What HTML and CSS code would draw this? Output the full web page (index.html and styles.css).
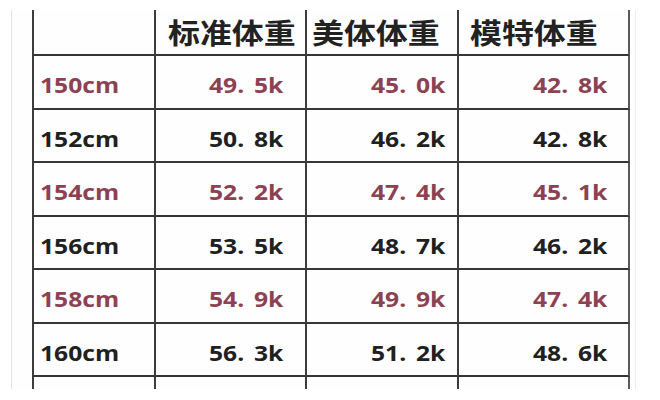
FILE: index.html
```html
<!DOCTYPE html>
<html lang="zh-CN">
<head>
<meta charset="utf-8">
<title>身高体重对照表</title>
<link rel="stylesheet" href="styles.css">
</head>
<body>
<div class="sheet">
  <div class="table">
    <div class="cell head c1"></div>
    <div class="cell head c2"><span class="zh">标准体重</span></div>
    <div class="cell head c3"><span class="zh">美体体重</span></div>
    <div class="cell head c4"><span class="zh">模特体重</span></div>

    <div class="cell c1 red"><span class="num">150cm</span></div>
    <div class="cell c2 red"><span class="num">49. 5k</span></div>
    <div class="cell c3 red"><span class="num">45. 0k</span></div>
    <div class="cell c4 red"><span class="num">42. 8k</span></div>

    <div class="cell c1"><span class="num">152cm</span></div>
    <div class="cell c2"><span class="num">50. 8k</span></div>
    <div class="cell c3"><span class="num">46. 2k</span></div>
    <div class="cell c4"><span class="num">42. 8k</span></div>

    <div class="cell c1 red"><span class="num">154cm</span></div>
    <div class="cell c2 red"><span class="num">52. 2k</span></div>
    <div class="cell c3 red"><span class="num">47. 4k</span></div>
    <div class="cell c4 red"><span class="num">45. 1k</span></div>

    <div class="cell c1"><span class="num">156cm</span></div>
    <div class="cell c2"><span class="num">53. 5k</span></div>
    <div class="cell c3"><span class="num">48. 7k</span></div>
    <div class="cell c4"><span class="num">46. 2k</span></div>

    <div class="cell c1 red"><span class="num">158cm</span></div>
    <div class="cell c2 red"><span class="num">54. 9k</span></div>
    <div class="cell c3 red"><span class="num">49. 9k</span></div>
    <div class="cell c4 red"><span class="num">47. 4k</span></div>

    <div class="cell c1"><span class="num">160cm</span></div>
    <div class="cell c2"><span class="num">56. 3k</span></div>
    <div class="cell c3"><span class="num">51. 2k</span></div>
    <div class="cell c4"><span class="num">48. 6k</span></div>

    <div class="cell c1"></div>
    <div class="cell c2"></div>
    <div class="cell c3"></div>
    <div class="cell c4"></div>
  </div>
</div>
</body>
</html>
```

FILE: styles.css
```css
html, body {
  margin: 0;
  padding: 0;
  background: #ffffff;
}

body {
  width: 660px;
  height: 400px;
  overflow: hidden;
}

.sheet {
  margin: 10px 0 0 11px;
  width: 623px;
  height: 379px;
  border-left: 1px solid #e4e4e4;
  border-right: 1px solid #ececec;
  overflow: hidden;
  background: #fefefe;
}

.table {
  margin-left: 20px;
  display: grid;
  grid-template-columns: 124px 151px 152px 171px;
  grid-template-rows: 46px;
  grid-auto-rows: 53.5px;
  width: 598px;
}

.cell {
  box-sizing: border-box;
  display: flex;
  align-items: center;
  border-right: 2px solid #3c3c3c;
  border-bottom: 2px solid #363636;
  color: #202020;
  padding-top: 5px;
  white-space: pre;
}

.num {
  display: inline-block;
  font-family: "Open Sans", "Liberation Sans", sans-serif;
  font-weight: 700;
  font-size: 22px;
  line-height: 1;
  word-spacing: 3px;
  transform: scaleX(1.12);
  transform-origin: right center;
}

.c1 {
  border-left: 2px solid #3c3c3c;
  padding-left: 6px;
}

.c1 .num {
  transform-origin: left center;
}

.c2 {
  justify-content: flex-end;
  padding-right: 22px;
}

.c3 {
  justify-content: flex-end;
  padding-right: 12px;
}

.c4 {
  justify-content: flex-end;
  padding-right: 21px;
  border-right-color: #5a5a5a;
}

.red {
  color: #8c4252;
}

.head {
  justify-content: flex-start;
  padding-top: 0;
  padding-right: 0;
}

.head.c2 { padding-left: 12px; }
.head.c3 { padding-left: 5px; }
.head.c4 { padding-left: 11px; }

.zh {
  display: inline-block;
  font-family: "Noto Sans CJK SC", "Noto Sans", sans-serif;
  font-weight: 700;
  font-size: 28px;
  color: #222222;
  transform: scaleX(1.14);
  transform-origin: left center;
  line-height: 1;
}
```
